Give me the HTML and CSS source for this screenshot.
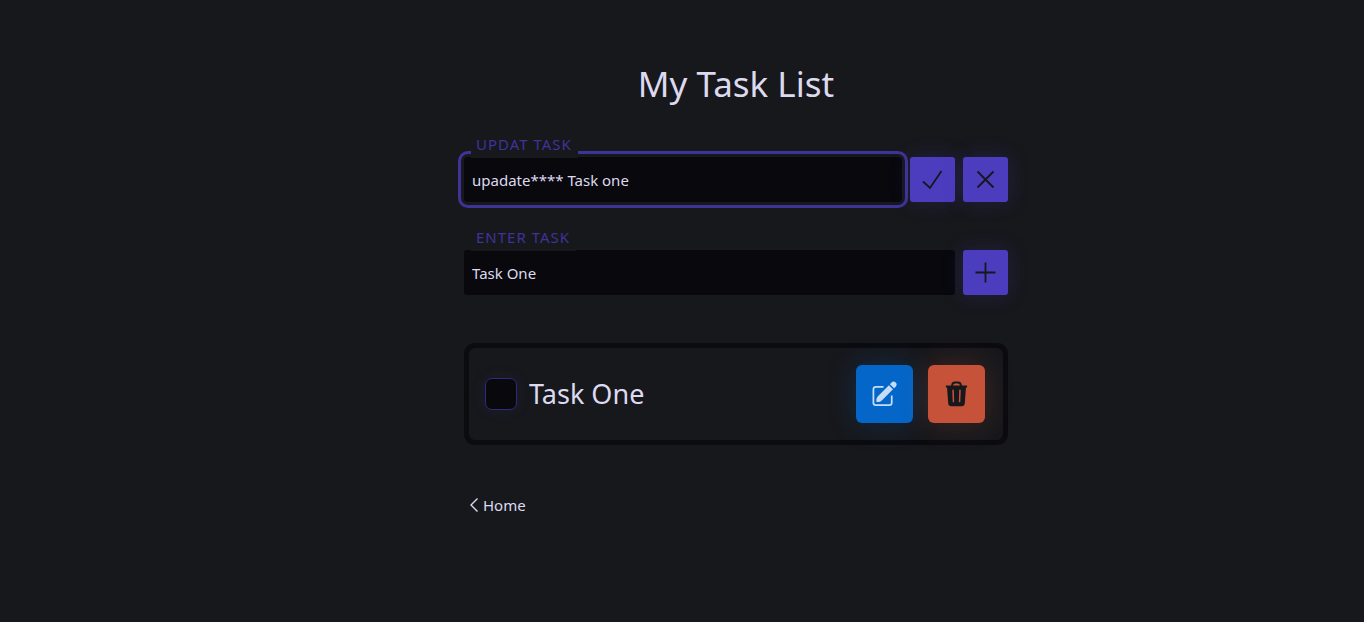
FILE: index.html
```html
<!DOCTYPE html>
<html lang="en">
<head>
<meta charset="utf-8">
<meta name="viewport" content="width=device-width, initial-scale=1">
<title>My Task List</title>
<link rel="stylesheet" href="styles.css">
</head>
<body>
<main class="page">
  <div class="content">
    <h1 class="title">My Task List</h1>

    <form class="task-form">
      <label class="field-label" for="update-task">Updat Task</label>
      <div class="field-row">
        <input class="field field-active" id="update-task" type="text" value="upadate**** Task one" autocomplete="off" spellcheck="false">
        <button class="btn" type="submit" aria-label="Save">
          <svg class="icon" viewBox="0 0 23 23"><path d="M2 13.500 9 20 20.500 3"/></svg>
        </button>
        <button class="btn" type="button" aria-label="Cancel">
          <svg class="icon" viewBox="0 0 23 23"><path d="M3.500 3.500 19.500 19.500M19.500 3.500 3.500 19.500"/></svg>
        </button>
      </div>
    </form>

    <form class="task-form">
      <label class="field-label" for="new-task">Enter Task</label>
      <div class="field-row">
        <input class="field" id="new-task" type="text" value="Task One" autocomplete="off" spellcheck="false">
        <button class="btn" type="submit" aria-label="Add">
          <svg class="icon" viewBox="0 0 23 23"><path d="M11.500 1.500v20M1.500 11.500h20"/></svg>
        </button>
      </div>
    </form>

    <ul class="task-list">
      <li class="task">
        <input class="task-check" id="task-1" type="checkbox">
        <label class="task-name" for="task-1">Task One</label>
        <button class="action action-edit" type="button" aria-label="Edit">
          <svg class="action-icon" viewBox="0 0 28 28"><path class="line" d="M13 6.500H5a2.500 2.500 0 0 0-2.500 2.500v14A2.500 2.500 0 0 0 5 25.500h14a2.500 2.500 0 0 0 2.500-2.500v-7.500"/><path d="M5.700 22.300c-.5-2.300.1-4.500 1.500-6L18.600 4.900l4.200 4.200L11.500 20.400c-1.500 1.400-3.500 2.200-5.800 1.900ZM19.700 3.800l1.600-1.600a3 3 0 0 1 4.300 0 3 3 0 0 1 0 4.200L23.900 8Z"/></svg>
        </button>
        <button class="action action-delete" type="button" aria-label="Delete">
          <svg class="action-icon" viewBox="0 0 28 28"><path class="line lid" d="M9.500 6.500V5a3 3 0 0 1 3-3h3a3 3 0 0 1 3 3v1.500"/><path fill-rule="evenodd" d="M3 5.200h22v2h-1.200l-1.200 16.300a3.300 3.300 0 0 1-3.300 3.100H8.700a3.300 3.300 0 0 1-3.300-3.100L4.200 7.200H3ZM9.600 9.500l.5 13h1.500l-.4-13ZM18.400 9.500h-1.600l-.4 13h1.500Z"/></svg>
        </button>
      </li>
    </ul>

    <a class="home-link" href="#">
      <svg class="chevron" viewBox="0 0 10 16"><path d="M8.500 1.500 2 8l6.500 6.500"/></svg>
      Home
    </a>
  </div>
</main>
</body>
</html>
```
FILE: styles.css
```css
:root {
  --background: #17181c;
  --field: #08080d;
  --text: #dddaf0;
  --primary: #4b3dbd;
  --primary-soft: #3e3399;
}

* {
  box-sizing: border-box;
}

body {
  margin: 0;
  min-height: 100vh;
  background: var(--background);
  color: var(--text);
  font-family: "Segoe UI", "Noto Sans", sans-serif;
  font-size: 15px;
}

.page {
  padding: 60px 0 60px 108px;
}

.content {
  max-width: 544px;
  margin: 0 auto;
}

.title {
  margin: 0 0 24px;
  font-size: 35px;
  font-weight: 400;
  line-height: 48px;
  text-align: center;
}

.task-form {
  margin-bottom: 23px;
}

.field-label {
  display: block;
  position: relative;
  z-index: 1;
  width: fit-content;
  margin: 0 0 -1px 7px;
  padding: 0 6px 2px 5px;
  background: var(--background);
  color: var(--primary-soft);
  letter-spacing: 1px;
  line-height: 24px;
  text-transform: uppercase;
}

.field-row {
  display: flex;
  gap: 8px;
}

.field {
  flex: 1;
  min-width: 0;
  height: 45px;
  padding: 0 8px;
  border: 0;
  border-radius: 3px;
  outline: 0;
  background: var(--field);
  color: var(--text);
  font: inherit;
}

.field-active {
  border-radius: 4px;
  outline: 3px solid var(--primary-soft);
  outline-offset: 3px;
}

.btn {
  display: grid;
  place-items: center;
  width: 45px;
  height: 45px;
  padding: 0;
  border: 0;
  border-radius: 3px;
  background: var(--primary);
  box-shadow: 0 0 20px #4b3dbd40;
  color: var(--background);
}

.icon {
  width: 23px;
  height: 23px;
  fill: none;
  stroke: currentColor;
  stroke-width: 1.8;
}

.task-list {
  margin: 48px 0;
  padding: 0;
  list-style: none;
}

.task {
  display: flex;
  align-items: center;
  padding: 17px 18px 17px 16px;
  border: 5px solid #0b0b10;
  border-radius: 11px;
}

.task-check {
  appearance: none;
  width: 32px;
  height: 32px;
  margin: 0 12px 0 0;
  border: 1px solid #33297a;
  border-radius: 7px;
  background: var(--field);
  box-shadow: 0 0 16px #4b3dbd1f;
}

.task-name {
  flex: 1;
  font-size: 27px;
  line-height: 40px;
}

.action {
  display: grid;
  place-items: center;
  width: 57px;
  height: 58px;
  margin-left: 15px;
  padding: 0;
  border: 0;
  border-radius: 6px;
}

.action-edit {
  background: #0466c8;
  box-shadow: 0 0 28px #0466c840;
  color: #c5ddf7;
}

.action-delete {
  background: #c65339;
  box-shadow: 0 0 28px #c6533940;
  color: var(--background);
}

.action-icon {
  width: 27px;
  height: 28px;
  fill: currentColor;
}

.line {
  fill: none;
  stroke: currentColor;
  stroke-width: 1.8;
}

.lid {
  stroke-width: 2;
}

.home-link {
  display: inline-flex;
  align-items: center;
  gap: 4px;
  margin-left: 5px;
  color: var(--text);
  line-height: 24px;
  text-decoration: none;
}

.chevron {
  width: 10px;
  height: 16px;
  fill: none;
  stroke: currentColor;
  stroke-width: 1.4;
}
```
